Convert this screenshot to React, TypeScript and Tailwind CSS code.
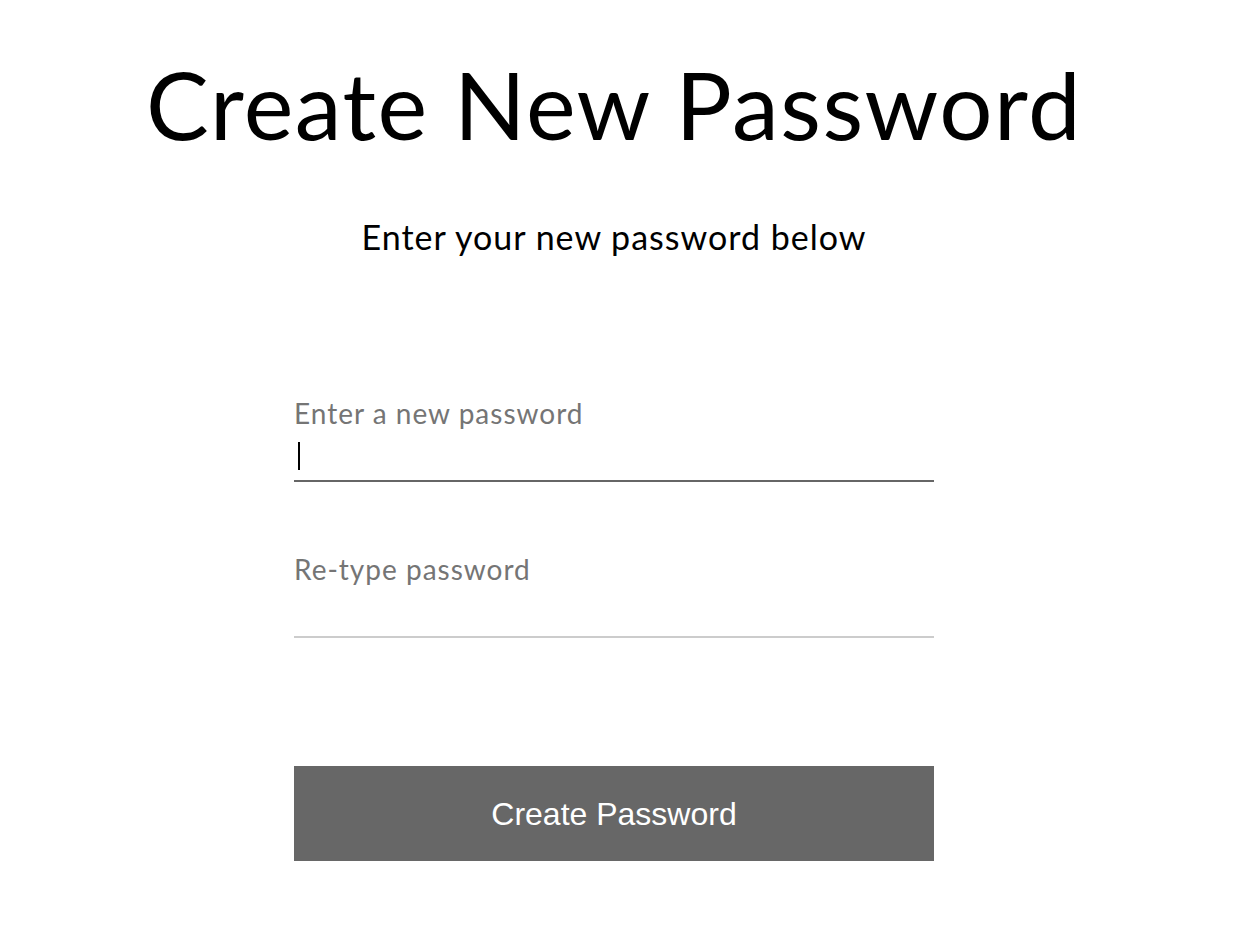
import React from 'react';

const Field = ({ label, active }: { label: string; active?: boolean }) => (
  <div className="flex flex-col">
    <label className="text-[28px] leading-[32px] tracking-[1px] text-[#757575]">{label}</label>
    <div className={`h-[53px] flex items-center border-b-2 ${active ? 'border-[#666666]' : 'border-[#cccccc]'}`}>
      {active && <span className="ml-[4px] mt-[2px] w-[2px] h-[28px] bg-black" />}
    </div>
  </div>
);

const App = () => {
  return (
    <div className="min-h-screen bg-white font-['Lato',sans-serif] text-black">
      <div className="w-[1228px] flex flex-col items-center pt-[44px]">
        <h1 className="text-[94px] leading-[120px] tracking-[1.5px]">Create New Password</h1>
        <p className="mt-[53px] text-[34px] leading-[40px] tracking-[1px]">Enter your new password below</p>

        <form className="mt-[140px] w-[640px] flex flex-col">
          <Field label="Enter a new password" active />
          <div className="mt-[71px]">
            <Field label="Re-type password" />
          </div>
          <button
            type="button"
            className="mt-[128px] h-[95px] bg-[#676767] text-white text-[32px] font-['Liberation_Sans',sans-serif]"
          >
            Create Password
          </button>
        </form>
      </div>
    </div>
  );
};

export default App;
